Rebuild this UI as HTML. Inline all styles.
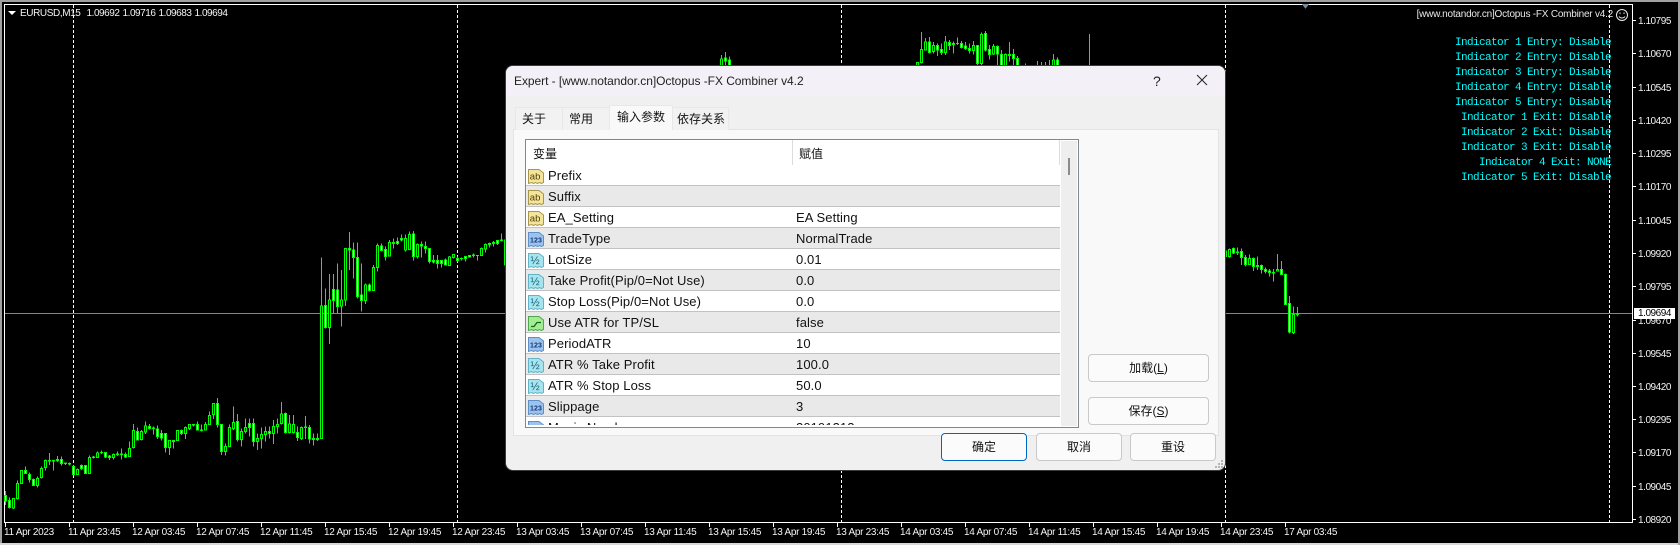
<!DOCTYPE html>
<html><head><meta charset="utf-8"><style>
html,body{margin:0;padding:0;background:#000}
#r{position:relative;width:1680px;height:545px;overflow:hidden;background:#000;font-family:"Liberation Sans","Noto Sans CJK SC",sans-serif}
#r div,#r span.a{position:absolute;white-space:nowrap}
.b{background:#fff}
.t{color:#f4f4f4;font-size:10px;line-height:12px;height:12px;letter-spacing:-.3px;top:526px;margin-top:1px}
.p{color:#f4f4f4;font-size:10px;line-height:12px;height:12px;letter-spacing:-.45px;left:1638px;margin-top:2px}
.c{color:#0ff;font:11px/12px "Liberation Mono",monospace;letter-spacing:-.6px;right:69px;white-space:pre;margin-top:2px}
.tab{background:#f2f2f2;border:1px solid #e8e8e8;border-bottom:0;box-sizing:border-box;font-size:12px;line-height:23px;color:#111;text-align:left;padding-left:6px}
.row{left:526px;width:534px;height:21px;box-sizing:border-box;border-bottom:1px solid #c2c2c2;font-size:13px;line-height:20px;color:#111;letter-spacing:.1px}
.row svg{position:absolute;left:2px;top:4px}
.row span{position:absolute;left:22px;top:1px}
.row span+span{left:270px}
.g{background:#e9e9e9}.w{background:#fff}
.btn{box-sizing:border-box;background:#fbfbfb;border:1px solid #c9c9c9;border-radius:4px;font-size:12px;color:#111;text-align:center;line-height:25px}
svg text{font-family:"Liberation Sans",sans-serif}
</style></head><body><div id="r">
<div style="left:0;top:0;width:1680px;height:2px;background:#a0a0a0"></div>
<div style="left:0;top:0;width:2px;height:545px;background:#a0a0a0"></div>
<div style="left:0;top:543px;width:1680px;height:2px;background:#d8d8d8"></div>
<div style="left:1678px;top:0;width:2px;height:545px;background:#a0a0a0"></div>
<div class="b" style="left:4px;top:4px;width:1629px;height:1px"></div>
<div class="b" style="left:4px;top:4px;width:1px;height:519px"></div>
<div class="b" style="left:4px;top:522px;width:1629px;height:1px"></div>
<div class="b" style="left:1632px;top:4px;width:1px;height:519px"></div>

<svg style="position:absolute;left:0;top:0" width="1680" height="545" shape-rendering="crispEdges">
<path d="M5 313.5H1632" stroke="#778899" fill="none"/>
<path d="M73.5 5V522M457.5 5V522M841.5 5V522M1225.5 5V522M1609.5 5V522" stroke="#fff" stroke-dasharray="3 2" fill="none"/>
<path d="M1302 4h7l-3.500 5z" fill="#778899"/>
<path d="M5.500 522V527M69.500 522V527M133.500 522V527M197.500 522V527M261.500 522V527M325.500 522V527M389.500 522V527M453.500 522V527M517.500 522V527M581.500 522V527M645.500 522V527M709.500 522V527M773.500 522V527M837.500 522V527M901.500 522V527M965.500 522V527M1029.500 522V527M1093.500 522V527M1157.500 522V527M1221.500 522V527M1285.500 522V527" stroke="#fff" fill="none"/>
<path d="M1632 20.500h4M1632 53.500h4M1632 87.500h4M1632 120.500h4M1632 153.500h4M1632 186.500h4M1632 220.500h4M1632 253.500h4M1632 286.500h4M1632 320.500h4M1632 353.500h4M1632 386.500h4M1632 419.500h4M1632 452.500h4M1632 486.500h4M1632 519.500h4" stroke="#fff" fill="none"/>

<g transform="translate(.167,270) scale(.33333)" stroke="#0f0" stroke-width="3">
<path fill="none" d="M16 663V705M28 683V715M40 685V717M52 632V688M64 600V642M76 590V612M88 607V637M100 625V648M112 620V652M124 590V625M136 568V602M148 549V585M160 570V602M172 558V576M184 560V586M196 577V585M208 578V587M220 587V615M232 595V615M244 583V600M256 586V611M268 557V611M280 558V566M292 545V564M304 541V552M316 546V564M328 555V570M340 550V569M352 545V558M364 536V568M376 548V564M388 515V561M400 462V535M412 473V512M424 480V512M436 454V492M448 462V478M460 470V494M472 467V507M484 480V512M496 490V548M508 510V555M520 510V535M532 480V513M544 478V495M556 470V507M568 462V480M580 462V470M592 454V482M604 463V485M616 456V482M628 425V465M640 400V447M652 384V473M664 463V555M676 520V557M688 463V530M700 410V480M712 432V515M724 475V530M736 445V490M748 445V500M760 445V530M772 490V540M784 473V535M796 470V515M808 470V505M820 450V522M832 445V490M844 396V463M856 427V490M868 435V490M880 435V490M892 470V513M904 470V510M916 438V507M928 465V520M940 490V527M952 490V513M964 -37V507M976 55V175M988 12V222M1000 12V130M1012 -20V130M1024 0V170M1036 -65V108M1048 -114V0M1060 -82V25M1072 -83V85M1084 -20V125M1096 40V102M1108 40V65M1120 -15V62M1132 -80V5"/>
<path fill="#fff" d="M13 677h6V693h-6zM25 691h6V713h-6zM73 601h6V611h-6zM85 614h6V628h-6zM97 628h6V646h-6zM145 571h6V573h-6zM157 571h6V573h-6zM169 569h6V572h-6zM181 568h6V580h-6zM193 579h6V580h-6zM205 581h6V582h-6zM217 590h6V613h-6zM241 587h6V596h-6zM253 587h6V610h-6zM277 561h6V563h-6zM301 547h6V548h-6zM313 548h6V561h-6zM325 558h6V563h-6zM349 552h6V553h-6zM361 552h6V553h-6zM373 553h6V561h-6zM409 484h6V510h-6zM445 469h6V475h-6zM457 474h6V476h-6zM469 477h6V500h-6zM481 490h6V504h-6zM493 490h6V533h-6zM517 511h6V514h-6zM541 481h6V491h-6zM577 463h6V465h-6zM589 463h6V480h-6zM601 480h6V481h-6zM649 400h6V464h-6zM661 464h6V545h-6zM709 454h6V508h-6zM745 460h6V473h-6zM757 460h6V514h-6zM805 484h6V490h-6zM853 430h6V487h-6zM889 487h6V502h-6zM913 471h6V473h-6zM925 472h6V507h-6zM937 506h6V508h-6zM949 506h6V509h-6zM973 106h6V172h-6zM997 58h6V92h-6zM1009 60h6V110h-6zM1045 -65h6V-60h-6zM1057 -60h6V-38h-6zM1069 -38h6V80h-6zM1081 75h6V92h-6zM1105 45h6V62h-6z"/>
<path fill="#000" d="M37 685h6V714h-6zM49 640h6V686h-6zM61 601h6V640h-6zM109 625h6V647h-6zM121 595h6V622h-6zM133 571h6V593h-6zM229 598h6V613h-6zM265 562h6V610h-6zM289 549h6V562h-6zM337 553h6V563h-6zM385 535h6V560h-6zM397 481h6V533h-6zM421 484h6V508h-6zM433 468h6V486h-6zM505 511h6V533h-6zM529 481h6V512h-6zM553 473h6V490h-6zM565 464h6V476h-6zM613 463h6V480h-6zM625 436h6V463h-6zM637 401h6V433h-6zM673 530h6V545h-6zM685 472h6V529h-6zM697 457h6V476h-6zM721 484h6V508h-6zM733 473h6V485h-6zM769 505h6V514h-6zM781 493h6V506h-6zM793 484h6V493h-6zM817 469h6V490h-6zM829 463h6V469h-6zM841 432h6V460h-6zM865 462h6V487h-6zM877 463h6V487h-6zM901 472h6V505h-6zM961 108h6V505h-6zM985 90h6V172h-6zM1021 90h6V108h-6zM1033 -65h6V90h-6zM1093 45h6V92h-6zM1117 -7h6V62h-6zM1129 -73h6V-7h-6z"/>
</g>
<g transform="translate(.167,0) scale(.33333)" stroke="#0f0" stroke-width="3">
<path fill="none" d="M1144 730V755M1156 740V782M1168 720V770M1180 715V745M1192 712V735M1204 703V725M1216 703V755M1228 695V750M1240 693V782M1252 730V775M1264 725V772M1276 725V760M1288 745V790M1300 765V790M1312 765V805M1324 780V802M1336 775V797M1348 768V798M1360 762V775M1372 770V785M1384 772V782M1396 768V785M1408 765V773M1420 760V772M1432 766V782M1444 743V767M1456 730V757M1468 727V742M1480 723V740M1492 720V735M1504 700V725M1516 720V795"/>
<path fill="#fff" d="M1141 738h6V752h-6zM1153 748h6V770h-6zM1177 727h6V731h-6zM1189 725h6V731h-6zM1201 716h6V720h-6zM1237 702h6V770h-6zM1261 733h6V738h-6zM1273 739h6V746h-6zM1285 745h6V785h-6zM1297 781h6V786h-6zM1309 781h6V790h-6zM1321 781h6V790h-6zM1333 780h6V795h-6zM1369 775h6V781h-6zM1381 775h6V776h-6zM1393 770h6V776h-6zM1405 766h6V771h-6zM1417 765h6V766h-6zM1429 766h6V767h-6zM1465 730h6V734h-6zM1477 727h6V730h-6zM1489 722h6V730h-6zM1501 720h6V722h-6zM1513 720h6V795h-6z"/>
<path fill="#000" d="M1165 727h6V768h-6zM1213 715h6V750h-6zM1225 703h6V748h-6zM1249 733h6V770h-6zM1345 771h6V796h-6zM1357 763h6V772h-6zM1441 745h6V766h-6zM1453 733h6V747h-6z"/>
</g>
<g transform="translate(700.167,0) scale(.33333)" stroke="#0f0" stroke-width="3">
<path fill="none" d="M64 165V197M76 156V197M88 170V197M652 187V197M664 96V190M676 114V150M688 111V160M700 126V160M712 130V168M724 130V165M736 108V165M748 120V150M760 125V160M772 113V135M784 123V145M796 126V150M808 130V160M820 123V163M832 136V197M844 98V197M856 93V155M868 135V178M880 132V165M892 136V197M904 150V197M916 160V197M928 126V185M940 147V197M952 168V197M976 190V197M1012 183V197M1024 186V197M1036 186V197M1048 180V197M1060 162V197M1072 172V197M1168 102V197"/>
<path fill="#fff" d="M73 174h6V183h-6zM85 180h6V200h-6zM685 126h6V157h-6zM709 137h6V150h-6zM721 148h6V158h-6zM745 127h6V137h-6zM757 130h6V134h-6zM769 130h6V131h-6zM781 130h6V142h-6zM793 138h6V146h-6zM805 145h6V152h-6zM829 137h6V190h-6zM853 100h6V150h-6zM865 148h6V164h-6zM889 139h6V162h-6zM901 164h6V200h-6zM925 163h6V166h-6zM937 163h6V176h-6zM949 175h6V200h-6zM1069 180h6V200h-6z"/>
<path fill="#000" d="M61 177h6V200h-6zM649 187h6V200h-6zM661 148h6V188h-6zM673 126h6V150h-6zM697 136h6V155h-6zM733 126h6V158h-6zM817 136h6V152h-6zM841 103h6V190h-6zM877 139h6V162h-6zM913 164h6V200h-6zM1057 180h6V200h-6z"/>
</g>
<g transform="translate(1200.167,190) scale(.33333)" stroke="#0f0" stroke-width="3">
<path fill="none" d="M76 175V205M88 175V203M100 172V192M112 172V195M124 175V225M136 195V230M148 193V225M160 203V243M172 200V240M184 223V250M196 233V250M208 237V260M220 237V275M232 192V245M244 213V253M256 250V345M268 318V430M280 350V432M292 351V380"/>
<path fill="#fff" d="M73 183h6V200h-6zM97 175h6V189h-6zM109 186h6V188h-6zM121 185h6V203h-6zM133 203h6V224h-6zM157 205h6V230h-6zM169 227h6V230h-6zM181 227h6V238h-6zM193 238h6V244h-6zM205 243h6V247h-6zM217 247h6V249h-6zM241 238h6V253h-6zM253 253h6V343h-6zM265 341h6V426h-6zM289 372h6V374h-6z"/>
<path fill="#000" d="M85 178h6V200h-6zM145 205h6V224h-6zM229 238h6V243h-6zM277 373h6V428h-6z"/>
</g>
</svg>

<svg style="position:absolute;left:8px;top:11px" width="8" height="4"><path d="M0 0h8L4 4z" fill="#fff"/></svg>
<div class="t" style="left:20px;top:6.500px;letter-spacing:-.4px">EURUSD,M15</div>
<div class="t" style="left:86.500px;top:6.500px;letter-spacing:-.45px">1.09692</div>
<div class="t" style="left:122.500px;top:6.500px;letter-spacing:-.45px">1.09716</div>
<div class="t" style="left:158.500px;top:6.500px;letter-spacing:-.45px">1.09683</div>
<div class="t" style="left:194.500px;top:6.500px;letter-spacing:-.45px">1.09694</div>

<div class="t" style="left:4px">11 Apr 2023</div><div class="t" style="left:68px">11 Apr 23:45</div><div class="t" style="left:132px">12 Apr 03:45</div><div class="t" style="left:196px">12 Apr 07:45</div><div class="t" style="left:260px">12 Apr 11:45</div><div class="t" style="left:324px">12 Apr 15:45</div><div class="t" style="left:388px">12 Apr 19:45</div><div class="t" style="left:452px">12 Apr 23:45</div><div class="t" style="left:516px">13 Apr 03:45</div><div class="t" style="left:580px">13 Apr 07:45</div><div class="t" style="left:644px">13 Apr 11:45</div><div class="t" style="left:708px">13 Apr 15:45</div><div class="t" style="left:772px">13 Apr 19:45</div><div class="t" style="left:836px">13 Apr 23:45</div><div class="t" style="left:900px">14 Apr 03:45</div><div class="t" style="left:964px">14 Apr 07:45</div><div class="t" style="left:1028px">14 Apr 11:45</div><div class="t" style="left:1092px">14 Apr 15:45</div><div class="t" style="left:1156px">14 Apr 19:45</div><div class="t" style="left:1220px">14 Apr 23:45</div><div class="t" style="left:1284px">17 Apr 03:45</div>

<div class="p" style="top:14px">1.10795</div><div class="p" style="top:47px">1.10670</div><div class="p" style="top:81px">1.10545</div><div class="p" style="top:114px">1.10420</div><div class="p" style="top:147px">1.10295</div><div class="p" style="top:180px">1.10170</div><div class="p" style="top:214px">1.10045</div><div class="p" style="top:247px">1.09920</div><div class="p" style="top:280px">1.09795</div><div class="p" style="top:314px">1.09670</div><div class="p" style="top:347px">1.09545</div><div class="p" style="top:380px">1.09420</div><div class="p" style="top:413px">1.09295</div><div class="p" style="top:446px">1.09170</div><div class="p" style="top:480px">1.09045</div><div class="p" style="top:513px">1.08920</div>
<div style="left:1634px;top:308px;width:41px;height:11px;background:#fff"></div>
<div class="p" style="top:307.500px;color:#000;margin-top:.5px">1.09694</div>

<div class="t" style="right:67px;top:8px;letter-spacing:-.22px;color:#e8e8e8">[www.notandor.cn]Octopus -FX Combiner v4.2</div>
<svg style="position:absolute;left:1615px;top:8px" width="14" height="14" fill="none" stroke="#e8e8e8"><circle cx="7" cy="7" r="5.500"/><path d="M4 8.500c1.500 2 4.500 2 6 0"/><path d="M5 4.500v1.500M9 4.500v1.500"/></svg>

<div class="c" style="top:35px">Indicator 1 Entry: Disable</div>
<div class="c" style="top:50px">Indicator 2 Entry: Disable</div>
<div class="c" style="top:65px">Indicator 3 Entry: Disable</div>
<div class="c" style="top:80px">Indicator 4 Entry: Disable</div>
<div class="c" style="top:95px">Indicator 5 Entry: Disable</div>
<div class="c" style="top:110px">Indicator 1 Exit: Disable</div>
<div class="c" style="top:125px">Indicator 2 Exit: Disable</div>
<div class="c" style="top:140px">Indicator 3 Exit: Disable</div>
<div class="c" style="top:155px">Indicator 4 Exit: NONE</div>
<div class="c" style="top:170px">Indicator 5 Exit: Disable</div>

<!-- dialog -->
<div style="left:506px;top:66px;width:719px;height:404px;background:#f0f0f0;border-radius:7px;box-shadow:0 0 0 1px #3c3c3c;overflow:hidden">
<div style="left:0;top:0;width:719px;height:30px;background:#f3f1f7"></div>
</div>
<div style="left:514px;top:73px;font-size:12px;line-height:16px;color:#222;letter-spacing:-.05px">Expert - [www.notandor.cn]Octopus -FX Combiner v4.2</div>
<div style="left:1153px;top:73px;font-size:14px;line-height:16px;color:#222">?</div>
<svg style="position:absolute;left:1196px;top:74px" width="12" height="12" fill="none" stroke="#222"><path d="M1 1L11 11M11 1L1 11"/></svg>

<div style="left:513px;top:129px;width:706px;height:307px;box-sizing:border-box;background:#f9f9f9;border:1px solid #e4e4e4"></div>
<div class="tab" style="left:515px;top:107px;width:48px;height:23px">关于</div>
<div class="tab" style="left:562px;top:107px;width:48px;height:23px">常用</div>
<div class="tab" style="left:609px;top:105px;width:64px;height:25px;background:#f9f9f9;line-height:22px;z-index:2;padding-left:7px">输入参数</div>
<div class="tab" style="left:672px;top:107px;width:57px;height:23px;padding-left:4px">依存关系</div>

<!-- list -->
<div style="left:525px;top:139px;width:554px;height:289px;box-sizing:border-box;background:#fff;border:1px solid #82878c;overflow:hidden"></div>
<div style="left:533px;top:145px;font-size:12px;line-height:18px;color:#111">变量</div>
<div style="left:799px;top:145px;font-size:12px;line-height:18px;color:#111">赋值</div>
<div style="left:792px;top:140px;width:1px;height:25px;background:#dcdcdc"></div>
<div style="left:1059px;top:140px;width:1px;height:25px;background:#dcdcdc"></div>
<div style="left:1061px;top:141px;width:16px;height:285px;background:#eee"></div>
<div style="left:1068px;top:158px;width:2px;height:17px;background:#8b8b8b"></div>
<div style="left:526px;top:165px;width:534px;height:260px;overflow:hidden">
<div class="row w" style="left:0;top:0"><svg width="16" height="15" viewBox="0 0 16 15"><path d="M.5.500H11L15.500 4V13.500l-2 1-2-1-2 1-2-1-2 1-2-1-3 1z" fill="#f5e59b" stroke="#a8964a"/><text x="1.800" y="10.500" font-size="9.500" fill="#4a3c08">ab</text></svg><span>Prefix</span></div>
<div class="row g" style="left:0;top:21px"><svg width="16" height="15" viewBox="0 0 16 15"><path d="M.5.500H11L15.500 4V13.500l-2 1-2-1-2 1-2-1-2 1-2-1-3 1z" fill="#f5e59b" stroke="#a8964a"/><text x="1.800" y="10.500" font-size="9.500" fill="#4a3c08">ab</text></svg><span>Suffix</span></div>
<div class="row w" style="left:0;top:42px"><svg width="16" height="15" viewBox="0 0 16 15"><path d="M.5.500H11L15.500 4V13.500l-2 1-2-1-2 1-2-1-2 1-2-1-3 1z" fill="#f5e59b" stroke="#a8964a"/><text x="1.800" y="10.500" font-size="9.500" fill="#4a3c08">ab</text></svg><span>EA_Setting</span><span>EA Setting</span></div>
<div class="row g" style="left:0;top:63px"><svg width="16" height="15" viewBox="0 0 16 15"><path d="M.5.500H11L15.500 4V13.500l-2 1-2-1-2 1-2-1-2 1-2-1-3 1z" fill="#9cc3ee" stroke="#5f8fc4"/><text x="2" y="10.500" font-size="7" font-weight="700" fill="#14397a">123</text></svg><span>TradeType</span><span>NormalTrade</span></div>
<div class="row w" style="left:0;top:84px"><svg width="16" height="15" viewBox="0 0 16 15"><path d="M.5.500H11L15.500 4V13.500l-2 1-2-1-2 1-2-1-2 1-2-1-3 1z" fill="#a9e4ee" stroke="#5fb5c7"/><text x="2.500" y="11" font-size="11" fill="#0f6278">½</text></svg><span>LotSize</span><span>0.01</span></div>
<div class="row g" style="left:0;top:105px"><svg width="16" height="15" viewBox="0 0 16 15"><path d="M.5.500H11L15.500 4V13.500l-2 1-2-1-2 1-2-1-2 1-2-1-3 1z" fill="#a9e4ee" stroke="#5fb5c7"/><text x="2.500" y="11" font-size="11" fill="#0f6278">½</text></svg><span>Take Profit(Pip/0=Not Use)</span><span>0.0</span></div>
<div class="row w" style="left:0;top:126px"><svg width="16" height="15" viewBox="0 0 16 15"><path d="M.5.500H11L15.500 4V13.500l-2 1-2-1-2 1-2-1-2 1-2-1-3 1z" fill="#a9e4ee" stroke="#5fb5c7"/><text x="2.500" y="11" font-size="11" fill="#0f6278">½</text></svg><span>Stop Loss(Pip/0=Not Use)</span><span>0.0</span></div>
<div class="row g" style="left:0;top:147px"><svg width="16" height="15" viewBox="0 0 16 15"><path d="M.5.500H11L15.500 4V13.500l-2 1-2-1-2 1-2-1-2 1-2-1-3 1z" fill="#a2ec92" stroke="#4ea650"/><path d="M3 10.500H6L9 6.500H13" fill="none" stroke="#14661c" stroke-width="1.300"/></svg><span>Use ATR for TP/SL</span><span>false</span></div>
<div class="row w" style="left:0;top:168px"><svg width="16" height="15" viewBox="0 0 16 15"><path d="M.5.500H11L15.500 4V13.500l-2 1-2-1-2 1-2-1-2 1-2-1-3 1z" fill="#9cc3ee" stroke="#5f8fc4"/><text x="2" y="10.500" font-size="7" font-weight="700" fill="#14397a">123</text></svg><span>PeriodATR</span><span>10</span></div>
<div class="row g" style="left:0;top:189px"><svg width="16" height="15" viewBox="0 0 16 15"><path d="M.5.500H11L15.500 4V13.500l-2 1-2-1-2 1-2-1-2 1-2-1-3 1z" fill="#a9e4ee" stroke="#5fb5c7"/><text x="2.500" y="11" font-size="11" fill="#0f6278">½</text></svg><span>ATR % Take Profit</span><span>100.0</span></div>
<div class="row w" style="left:0;top:210px"><svg width="16" height="15" viewBox="0 0 16 15"><path d="M.5.500H11L15.500 4V13.500l-2 1-2-1-2 1-2-1-2 1-2-1-3 1z" fill="#a9e4ee" stroke="#5fb5c7"/><text x="2.500" y="11" font-size="11" fill="#0f6278">½</text></svg><span>ATR % Stop Loss</span><span>50.0</span></div>
<div class="row g" style="left:0;top:231px"><svg width="16" height="15" viewBox="0 0 16 15"><path d="M.5.500H11L15.500 4V13.500l-2 1-2-1-2 1-2-1-2 1-2-1-3 1z" fill="#9cc3ee" stroke="#5f8fc4"/><text x="2" y="10.500" font-size="7" font-weight="700" fill="#14397a">123</text></svg><span>Slippage</span><span>3</span></div>
<div class="row w" style="left:0;top:252px"><svg width="16" height="15" viewBox="0 0 16 15"><path d="M.5.500H11L15.500 4V13.500l-2 1-2-1-2 1-2-1-2 1-2-1-3 1z" fill="#9cc3ee" stroke="#5f8fc4"/><text x="2" y="10.500" font-size="7" font-weight="700" fill="#14397a">123</text></svg><span>Magic Number</span><span>20191212</span></div>
</div>

<div class="btn" style="left:1088px;top:354px;width:121px;height:28px;line-height:26px">加载(<u>L</u>)</div>
<div class="btn" style="left:1088px;top:397px;width:121px;height:28px;line-height:26px">保存(<u>S</u>)</div>
<div class="btn" style="left:941px;top:433px;width:86px;height:28px;line-height:26px;border-color:#0067c0">确定</div>
<div class="btn" style="left:1036px;top:433px;width:86px;height:28px;line-height:26px">取消</div>
<div class="btn" style="left:1130px;top:433px;width:86px;height:28px;line-height:26px">重设</div>
<svg style="position:absolute;left:1214px;top:459px" width="10" height="10" fill="#b5b5b5"><path d="M7 1h2v2H7zM4 4h2v2H4zM7 4h2v2H7zM1 7h2v2H1zM4 7h2v2H4zM7 7h2v2H7z"/></svg>
</div></body></html>
